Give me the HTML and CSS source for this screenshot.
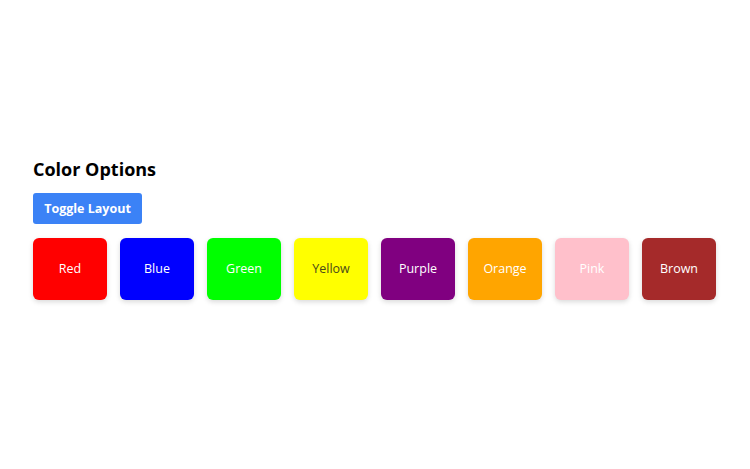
FILE: index.html
```html
<!DOCTYPE html>
<html lang="en">
<head>
<meta charset="utf-8">
<title>Color Options</title>
<link rel="stylesheet" href="styles.css">
</head>
<body>
<main class="page">
  <h2 class="title">Color Options</h2>
  <button class="toggle">Toggle Layout</button>
  <div class="grid">
    <div class="swatch red">Red</div>
    <div class="swatch blue">Blue</div>
    <div class="swatch green">Green</div>
    <div class="swatch yellow">Yellow</div>
    <div class="swatch purple">Purple</div>
    <div class="swatch orange">Orange</div>
    <div class="swatch pink">Pink</div>
    <div class="swatch brown">Brown</div>
  </div>
</main>
</body>
</html>
```
FILE: styles.css
```css
html, body {
  margin: 0;
  padding: 0;
  background: #fff;
}
body {
  font-family: "Open Sans", "Noto Sans", sans-serif;
  min-height: 100vh;
  display: flex;
  flex-direction: column;
  justify-content: center;
}
.page {
  padding: 0 33px;
  margin-top: -14px;
}
.title {
  margin: 0 0 11px 0;
  font-size: 18px;
  font-weight: 700;
  color: #000;
  line-height: 26px;
}
.toggle {
  display: block;
  background: #3b82f6;
  color: #fff;
  border: none;
  border-radius: 3px;
  font-family: inherit;
  font-weight: 700;
  font-size: 12.5px;
  width: 109px;
  height: 31px;
  padding: 0;
  margin: 0 0 14px 0;
}
.grid {
  display: flex;
  gap: 13px;
}
.swatch {
  width: 74px;
  height: 62px;
  border-radius: 6px;
  display: flex;
  align-items: center;
  justify-content: center;
  color: #fff;
  font-size: 12.5px;
  box-shadow: 0 2px 5px rgba(0,0,0,0.15);
}
.red { background: #ff0000; }
.blue { background: #0000ff; }
.green { background: #00ff00; }
.yellow { background: #ffff00; color: #4a4a1a; }
.purple { background: #800080; }
.orange { background: #ffa500; }
.pink { background: #ffc0cb; }
.brown { background: #a52a2a; }
```
